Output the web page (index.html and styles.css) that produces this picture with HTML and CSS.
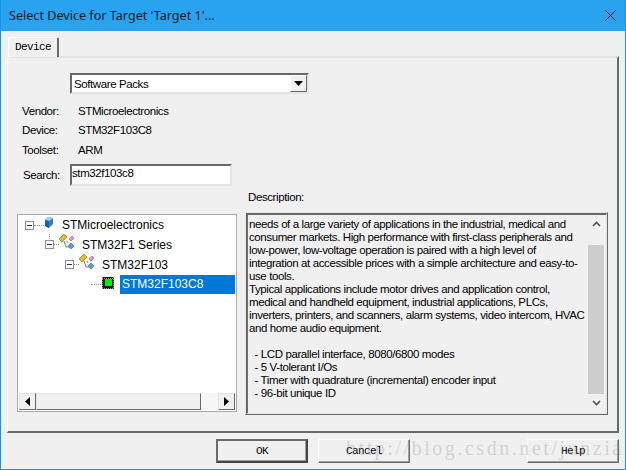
FILE: index.html
```html
<!DOCTYPE html>
<html lang="en">
<head>
<meta charset="utf-8">
<title>Select Device</title>
<link rel="stylesheet" href="styles.css">
</head>
<body>
<div class="window">
  <header class="titlebar">
    <span class="title">Select Device for Target 'Target 1'...</span>
    <svg class="close" width="11" height="11" viewBox="0 0 11 11"><path d="M.5.5l10 10M10.500.5l-10 10" stroke="#000" fill="none"/></svg>
  </header>
  <main class="body">
    <div class="tabstrip"><div class="tab">Device</div></div>
    <section class="panel">
      <div class="combo">
        <span class="combo-value">Software Packs</span>
        <span class="combo-btn"><svg width="9" height="5" viewBox="0 0 9 5"><path d="M0 0h9L4.500 5z" fill="#000"/></svg></span>
      </div>
      <dl class="info">
        <div class="info-row"><dt>Vendor:</dt><dd>STMicroelectronics</dd></div>
        <div class="info-row"><dt>Device:</dt><dd>STM32F103C8</dd></div>
        <div class="info-row"><dt>Toolset:</dt><dd>ARM</dd></div>
      </dl>
      <div class="search">
        <label class="search-label">Search:</label>
        <div class="search-input">stm32f103c8</div>
      </div>
      <div class="desc-label">Description:</div>
      <div class="columns">
        <div class="tree">
          <div class="tree-rows">
            <div class="node lvl0">
              <span class="exp"></span><span class="dots"></span>
              <svg class="ico" width="10" height="11" viewBox="0 0 10 11"><path d="M4 0l5 1v6l-4 4-4-2V3z" fill="#2f7fd6"/><path d="M1 3l3-3 5 1-4 3z" fill="#a6d0f5"/><path d="M1 3l4 1v7l-4-2z" fill="#1c5cad"/></svg>
              <span class="node-text">STMicroelectronics</span>
            </div>
            <div class="node lvl1">
              <span class="exp"></span><span class="dots"></span>
              <svg class="ico-group" width="16" height="16" viewBox="0 0 16 16"><path d="M0 5l5-5 3 3-5 5z" fill="#e8b92e" stroke="#8a6d10" stroke-width=".6"/><path d="M10 5l3-3 2 2-3 3z" fill="#e78fd8" stroke="#a050a0" stroke-width=".6"/><path d="M5 7l2 6h3M8 7l1 2" fill="none" stroke="#666" stroke-width=".8"/><path d="M9 12l3-3 3 3-3 3z" fill="#5b9be0" stroke="#2f6aa8" stroke-width=".6"/></svg>
              <span class="node-text">STM32F1 Series</span>
            </div>
            <div class="node lvl2">
              <span class="exp"></span><span class="dots"></span>
              <svg class="ico-group" width="16" height="16" viewBox="0 0 16 16"><path d="M0 5l5-5 3 3-5 5z" fill="#e8b92e" stroke="#8a6d10" stroke-width=".6"/><path d="M10 5l3-3 2 2-3 3z" fill="#e78fd8" stroke="#a050a0" stroke-width=".6"/><path d="M5 7l2 6h3M8 7l1 2" fill="none" stroke="#666" stroke-width=".8"/><path d="M9 12l3-3 3 3-3 3z" fill="#5b9be0" stroke="#2f6aa8" stroke-width=".6"/></svg>
              <span class="node-text">STM32F103</span>
            </div>
            <div class="node lvl3">
              <span class="dots long"></span>
              <svg class="ico-chip" width="12" height="12" viewBox="0 0 12 12"><rect width="12" height="12" fill="#1a1a1a"/><path d="M0 1.500h12M0 11.500h12" stroke="#999" stroke-dasharray="1 1"/><path d="M.5 0v12M11.500 0v12" stroke="#999" stroke-dasharray="1 1"/><rect x="3" y="2" width="7" height="7" fill="#00f000"/></svg>
              <span class="node-text selected">STM32F103C8</span>
            </div>
          </div>
          <div class="hscroll">
            <span class="sb-btn"><svg width="5" height="9" viewBox="0 0 5 9"><path d="M5 0v9L0 4.500z" fill="#000"/></svg></span>
            <span class="sb-thumb"></span>
            <span class="sb-track"></span>
            <span class="sb-btn"><svg width="5" height="9" viewBox="0 0 5 9"><path d="M0 0v9l5-4.500z" fill="#000"/></svg></span>
          </div>
        </div>
        <div class="desc-outer">
          <div class="desc">
            <div class="desc-text">needs of a large variety of applications in the industrial, medical and<br>consumer markets. High performance with first-class peripherals and<br>low-power, low-voltage operation is paired with a high level of<br>integration at accessible prices with a simple architecture and easy-to-<br>use tools.<br>Typical applications include motor drives and application control,<br>medical and handheld equipment, industrial applications, PLCs,<br>inverters, printers, and scanners, alarm systems, video intercom, HVAC<br>and home audio equipment.<br><br>&nbsp; - LCD parallel interface, 8080/6800 modes<br>&nbsp; - 5 V-tolerant I/Os<br>&nbsp; - Timer with quadrature (incremental) encoder input<br>&nbsp; - 96-bit unique ID</div>
            <div class="vscroll">
              <span class="vs-btn"><svg width="9" height="6" viewBox="0 0 9 6"><path d="M1 5l3.500-3.500L8 5" fill="none" stroke="#505050" stroke-width="1.600"/></svg></span>
              <span class="vs-gap"></span>
              <span class="vs-thumb"></span>
              <span class="vs-btn"><svg width="9" height="6" viewBox="0 0 9 6"><path d="M1 1l3.500 3.500L8 1" fill="none" stroke="#505050" stroke-width="1.600"/></svg></span>
            </div>
          </div>
        </div>
      </div>
    </section>
    <footer class="footer">
      <button class="btn default">OK</button>
      <button class="btn">Cancel</button>
      <button class="btn push">Help</button>
    </footer>
  </main>
  <div class="watermark">http://blog.csdn.net/junzia</div>
</div>
</body>
</html>
```
FILE: styles.css
```css
* { box-sizing: border-box; }
html, body { margin: 0; padding: 0; overflow: hidden; }
body { width: 626px; height: 470px; }

.window {
  position: relative;
  width: 626px;
  height: 470px;
  border: 1px solid #0f97ee;
  border-top: 0;
  background: #f0f0f0;
  display: flex;
  flex-direction: column;
  font-family: "Liberation Sans", Arial, sans-serif;
  font-size: 11.500px;
  letter-spacing: -0.400px;
  color: #000;
}

.titlebar {
  height: 31px;
  flex: none;
  background: #29a3ef;
  display: flex;
  align-items: center;
  justify-content: space-between;
  padding: 0 10px 0 8px;
  letter-spacing: 0;
}
.title { font-family: "Noto Sans", sans-serif; font-size: 12.600px; color: #0a1a28; }
.close { margin-right: -1px; }

.body { flex: 1; display: flex; flex-direction: column; padding: 6px 6px 0 6px; }

.tabstrip { height: 19px; display: flex; padding-left: 1px; flex: none; }
.tab {
  width: 51px;
  height: 20px;
  position: relative;
  z-index: 1;
  background: #f0f0f0;
  border: 1px solid #fff;
  border-bottom: 0;
  border-right: 2px solid #696969;
  border-radius: 2px 2px 0 0;
  font-family: "Liberation Mono", monospace;
  font-size: 11px;
  letter-spacing: -0.600px;
  line-height: 18px;
  text-align: center;
}

.panel {
  height: 377px;
  flex: none;
  border-top: 2px solid #e3e3e3;
  border-left: 1px solid #fff;
  border-right: 2px solid #696969;
  border-bottom: 2px solid #696969;
  padding: 15px 0 0 9px;
  display: flex;
  flex-direction: column;
}

.combo {
  margin-left: 53px;
  width: 239px;
  height: 21px;
  background: #fff;
  border: 2px solid;
  border-color: #696969 #e3e3e3 #e3e3e3 #696969;
  display: flex;
  justify-content: space-between;
  align-items: center;
  padding-left: 2px;
}
.combo-value { line-height: 16px; }
.combo-btn {
  width: 17px;
  height: 17px;
  background: #f0f0f0;
  border: 1px solid;
  border-color: #fff #696969 #696969 #fff;
  display: flex;
  align-items: center;
  justify-content: center;
}

.info { margin: 7px 0 0 5px; display: flex; flex-direction: column; }
.info-row { display: flex; height: 19.500px; align-items: center; }
.info dt { width: 56px; }
.info dd { margin: 0; }

.search { display: flex; align-items: center; margin: 4px 0 0 6px; height: 22px; }
.search-label { width: 47px; }
.search-input {
  width: 162px;
  height: 22px;
  background: #fff;
  border: 2px solid;
  border-color: #696969 #e3e3e3 #e3e3e3 #696969;
  padding-left: 0;
  line-height: 15px;
}

.desc-label { margin: 5px 0 0 231px; height: 17px; line-height: 13px; }

.columns { display: flex; align-items: flex-start; margin-top: 4px; }

.tree {
  width: 220px;
  height: 198px;
  margin-top: 2px;
  background: #fff;
  border: 1px solid #a9a9a9;
  display: flex;
  flex-direction: column;
  justify-content: space-between;
  padding: 0 1px 1px 1px;
}
.tree-rows { padding-top: 1px; display: flex; flex-direction: column; }
.node { display: flex; align-items: center; height: 19.670px; position: relative; }
.lvl0 { padding-left: 6px; }
.lvl1 { padding-left: 26px; }
.lvl2 { padding-left: 46px; }
.lvl3 { padding-left: 72px; }

.exp {
  width: 9px;
  height: 9px;
  border: 1px solid #8d8d8d;
  position: relative;
  flex: none;
}
.exp::after {
  content: "";
  position: absolute;
  left: 1px;
  right: 1px;
  top: 3px;
  height: 1px;
  background: #333;
}
.lvl1 .exp::before {
  content: "";
  position: absolute;
  left: 3px;
  top: -7px;
  height: 5px;
  border-left: 1px dotted #9a9a9a;
}
.dots { width: 9px; border-top: 1px dotted #9a9a9a; flex: none; }
.dots.long { width: 10px; }
.lvl0 .dots { width: 10px; }
.lvl1 .dots, .lvl2 .dots { width: 5px; }
.ico { margin: -5px 0 0 0; flex: none; }
.ico-group { margin: -6px 0 0 0; flex: none; }
.ico-chip { margin: -2px 6px 0 1px; flex: none; }
.lvl0 .node-text { margin-left: 8px; }
.lvl1 .node-text, .lvl2 .node-text { margin-left: 7px; }
.node-text { font-size: 12px; letter-spacing: 0; white-space: nowrap; }
.selected {
  background: #0078d7;
  color: #fff;
  width: 116px;
  height: 19px;
  line-height: 19px;
  padding-left: 2px;
}

.hscroll { display: flex; height: 17px; flex: none; }
.sb-btn {
  width: 17px;
  background: #f0f0f0;
  border: 1px solid;
  border-color: #e3e3e3 #696969 #696969 #e3e3e3;
  display: flex;
  align-items: center;
  justify-content: center;
}
.sb-thumb {
  width: 165px;
  background: #f0f0f0;
  border: 1px solid;
  border-color: #e3e3e3 #696969 #696969 #e3e3e3;
}
.sb-track { width: 17px; background: #f6f6f6; }

.desc-outer {
  margin-left: 8px;
  width: 363px;
  height: 203px;
  border: 1px solid;
  border-color: #e3e3e3 #696969 #696969 #e3e3e3;
}
.desc {
  height: 100%;
  border: 2px solid;
  border-color: #696969 #e3e3e3 #e3e3e3 #696969;
  border-width: 2px 1px 1px 2px;
  display: flex;
  justify-content: space-between;
}
.desc-text {
  padding: 3px 0 0 1px;
  line-height: 13px;
  white-space: nowrap;
}
.vscroll { width: 16px; margin-right: 2px; display: flex; flex-direction: column; flex: none; }
.vs-btn { height: 19px; display: flex; align-items: center; justify-content: center; flex: none; }
.vs-gap { height: 11px; flex: none; }
.vs-thumb { flex: 1; background: #cdcdcd; }

.footer { display: flex; gap: 10px; padding: 6px 0 0 209px; }
.btn {
  width: 92px;
  height: 24px;
  padding: 0;
  background: #f0f0f0;
  border: 1px solid;
  border-color: #fff #696969 #696969 #fff;
  box-shadow: inset -1px -1px 0 #a0a0a0;
  font-family: "Liberation Mono", monospace;
  font-size: 11px;
  letter-spacing: -0.600px;
  color: #000;
}
.btn.default { border: 2px solid #555; border-color: #696969 #444 #444 #696969; }
.btn.push { margin-left: auto; }

.watermark {
  position: absolute;
  left: 345px;
  bottom: 9px;
  font-family: "Liberation Serif", serif;
  font-size: 20px;
  letter-spacing: 2.550px;
  color: rgba(150, 150, 150, 0.35);
  pointer-events: none;
  white-space: nowrap;
}
```
